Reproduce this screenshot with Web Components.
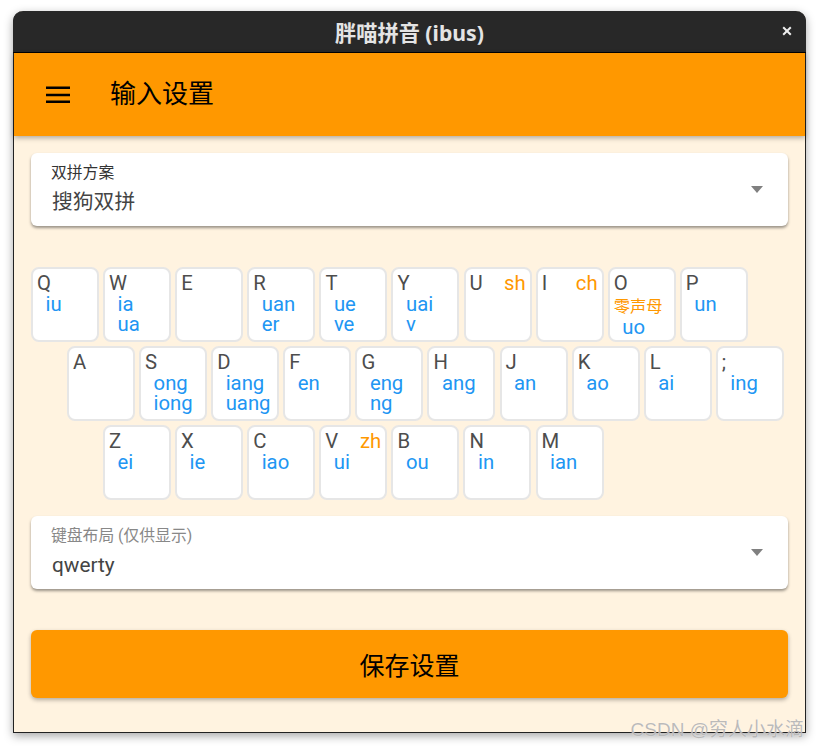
<!DOCTYPE html>
<html lang="zh">
<head>
<meta charset="utf-8">
<title>输入设置</title>
<style>
  html, body { margin: 0; height: 100%; background: #fff; overflow: hidden; }
  body { font-family: Roboto, "Noto Sans CJK SC", sans-serif; }
</style>
</head>
<body>
<app-window heading="胖喵拼音 (ibus)">
  <app-bar heading="输入设置"></app-bar>
  <main-pane>
    <select-card label="双拼方案" value="搜狗双拼"></select-card>
    <key-board>
      <key-row>
        <key-cap k="Q">iu</key-cap>
        <key-cap k="W"><div>ia</div><div>ua</div></key-cap>
        <key-cap k="E"></key-cap>
        <key-cap k="R"><div>uan</div><div>er</div></key-cap>
        <key-cap k="T"><div>ue</div><div>ve</div></key-cap>
        <key-cap k="Y"><div>uai</div><div>v</div></key-cap>
        <key-cap k="U" mark="sh"></key-cap>
        <key-cap k="I" mark="ch"></key-cap>
        <key-cap k="O" zero="零声母">uo</key-cap>
        <key-cap k="P">un</key-cap>
      </key-row>
      <key-row indent="36">
        <key-cap k="A"></key-cap>
        <key-cap k="S"><div>ong</div><div>iong</div></key-cap>
        <key-cap k="D"><div>iang</div><div>uang</div></key-cap>
        <key-cap k="F">en</key-cap>
        <key-cap k="G"><div>eng</div><div>ng</div></key-cap>
        <key-cap k="H">ang</key-cap>
        <key-cap k="J">an</key-cap>
        <key-cap k="K">ao</key-cap>
        <key-cap k="L">ai</key-cap>
        <key-cap k=";">ing</key-cap>
      </key-row>
      <key-row indent="72">
        <key-cap k="Z">ei</key-cap>
        <key-cap k="X">ie</key-cap>
        <key-cap k="C">iao</key-cap>
        <key-cap k="V" mark="zh">ui</key-cap>
        <key-cap k="B">ou</key-cap>
        <key-cap k="N">in</key-cap>
        <key-cap k="M">ian</key-cap>
      </key-row>
    </key-board>
    <select-card label="键盘布局 (仅供显示)" value="qwerty" muted></select-card>
    <save-button>保存设置</save-button>
  </main-pane>
  <water-mark>CSDN @穷人小水滴</water-mark>
</app-window>

<script>
class AppWindow extends HTMLElement {
    connectedCallback() {
        let heading = this.getAttribute('heading');
        const shadow = this.attachShadow({mode: 'open'});
        shadow.innerHTML = `
        <style>
            :host { display: flex; flex-direction: column; position: absolute; left: 13px; top: 11px; width: 793px; height: 722px;
                box-sizing: border-box; border: 1px solid #222; border-top: 0; border-radius: 10px 10px 0 0;
                box-shadow: 0 3px 10px rgba(0,0,0,.35); background: #fff3e0; }
            .title { flex: none; height: 41px; margin: 0 -1px; background: #282828; border-bottom: 1px solid #000; border-radius: 10px 10px 0 0;
                display: flex; align-items: center; justify-content: center; position: relative;
                color: #e4e4e4; font: 700 21.2px "Noto Sans", "Noto Sans CJK SC", sans-serif; }
            .close { position: absolute; right: 13px; top: 14px; width: 12px; height: 12px; }
        </style>
        <div class="title">${heading}
            <svg class="close" viewBox="0 0 12 12"><path d="M2.2 2.2l7.6 7.6M9.8 2.2l-7.6 7.6" stroke="#eee" stroke-width="2"/></svg>
        </div>
        <slot></slot>`;
    }
}

class AppBar extends HTMLElement {
    connectedCallback() {
        let heading = this.getAttribute('heading');
        const shadow = this.attachShadow({mode: 'open'});
        shadow.innerHTML = `
        <style>
            :host { display: flex; flex: none; align-items: center; height: 83px; padding-left: 32px; background: #ff9800;
                box-shadow: 0 2px 5px rgba(0,0,0,.3); position: relative; color: #000; }
            svg { width: 24px; height: 24px; margin-right: 41px; flex: none; }
            span { font: 26px/30px "Noto Sans CJK SC", sans-serif; margin: -6px 0 0 -1px; }
        </style>
        <svg viewBox="0 0 24 24"><path d="M0 3.5h24v2.4H0zM0 10.8h24v2.4H0zM0 17.5h24v2.4H0z"/></svg>
        <span>${heading}</span>`;
    }
}

class MainPane extends HTMLElement {
    connectedCallback() {
        const shadow = this.attachShadow({mode: 'open'});
        shadow.innerHTML = `
        <style>
            :host { display: flex; flex-direction: column; flex: 1; padding: 17px 17px 0; background: #fff3e0; }
        </style>
        <slot></slot>`;
    }
}

class SelectCard extends HTMLElement {
    connectedCallback() {
        let label = this.getAttribute('label');
        let value = this.getAttribute('value');
        const shadow = this.attachShadow({mode: 'open'});
        shadow.innerHTML = `
        <style>
            :host { display: flex; flex: none; align-items: center; height: 73px; box-sizing: border-box; padding: 0 25px 0 20px;
                background: #fff; border-radius: 6px; box-shadow: 0 2px 3px rgba(0,0,0,.4); }
            .text { flex: 1; display: flex; flex-direction: column; }
            .label { font-size: 15.8px; line-height: 20px; color: #333; margin-top: -2px; }
            .value { font-size: 20.8px; line-height: 28px; color: #444; margin-top: 5px; margin-bottom: -1px; margin-left: 1px; }
            :host([muted]) .label { color: #888; margin-top: -3px; }
            :host([muted]) .value { margin-top: 5px; margin-bottom: -2px; }
            svg { width: 12px; height: 7px; flex: none; }
        </style>
        <div class="text"><div class="label">${label}</div><div class="value">${value}</div></div>
        <svg viewBox="0 0 12 7"><path d="M0 0h12L6 7z" fill="#808080"/></svg>`;
    }
}

class KeyBoard extends HTMLElement {
    connectedCallback() {
        const shadow = this.attachShadow({mode: 'open'});
        shadow.innerHTML = `
        <style>
            :host { display: flex; flex-direction: column; gap: 4px; margin: 41px 0 16px; }
        </style>
        <slot></slot>`;
    }
}

class KeyRow extends HTMLElement {
    connectedCallback() {
        let indent = this.getAttribute('indent') || 0;
        const shadow = this.attachShadow({mode: 'open'});
        shadow.innerHTML = `
        <style>
            :host { display: flex; gap: 4.1px; padding-left: ${indent}px; }
        </style>
        <slot></slot>`;
    }
}

class KeyCap extends HTMLElement {
    connectedCallback() {
        let k = this.getAttribute('k');
        let mark = this.getAttribute('mark') || '';
        let zero = this.getAttribute('zero');
        const shadow = this.attachShadow({mode: 'open'});
        shadow.innerHTML = `
        <style>
            :host { display: block; flex: none; width: 68px; height: 75px; box-sizing: border-box; padding: 2px 4px 0;
                background: #fff; border: 2px solid #e6e6e6; border-radius: 8px; font-size: 20.3px; overflow: hidden; }
            .top { display: flex; justify-content: space-between; line-height: 24px; color: #4d4d4d; }
            .mark { color: #ff9800; }
            .zero { color: #ff9800; font-size: 16.3px; line-height: 20px; margin-top: 2px; white-space: nowrap; }
            .hints { color: #2196f3; line-height: 20px; padding-left: 8.5px; margin-top: -1px; }
            .zero + .hints { margin-top: 0; }
        </style>
        <div class="top"><span>${k}</span><span class="mark">${mark}</span></div>
        ${zero ? `<div class="zero">${zero}</div>` : ''}
        <div class="hints"><slot></slot></div>`;
    }
}

class SaveButton extends HTMLElement {
    connectedCallback() {
        const shadow = this.attachShadow({mode: 'open'});
        shadow.innerHTML = `
        <style>
            :host { display: flex; flex: none; align-items: center; justify-content: center; height: 68px; margin-top: 41px;
                background: #ff9800; border-radius: 6px; box-shadow: 0 2px 4px rgba(0,0,0,.3);
                color: #000; font: 25px "Noto Sans CJK SC", sans-serif; }
        </style>
        <slot></slot>`;
    }
}

class WaterMark extends HTMLElement {
    connectedCallback() {
        const shadow = this.attachShadow({mode: 'open'});
        shadow.innerHTML = `
        <style>
            :host { position: absolute; right: 1px; bottom: -9px; color: rgba(175,175,175,.85); white-space: nowrap;
                font: 19px "Liberation Sans", "Noto Sans CJK SC", sans-serif; text-shadow: 0 0 1px rgba(255,255,255,.8); }
        </style>
        <slot></slot>`;
    }
}

customElements.define('app-window', AppWindow);
customElements.define('app-bar', AppBar);
customElements.define('main-pane', MainPane);
customElements.define('select-card', SelectCard);
customElements.define('key-board', KeyBoard);
customElements.define('key-row', KeyRow);
customElements.define('key-cap', KeyCap);
customElements.define('save-button', SaveButton);
customElements.define('water-mark', WaterMark);
</script>
</body>
</html>
